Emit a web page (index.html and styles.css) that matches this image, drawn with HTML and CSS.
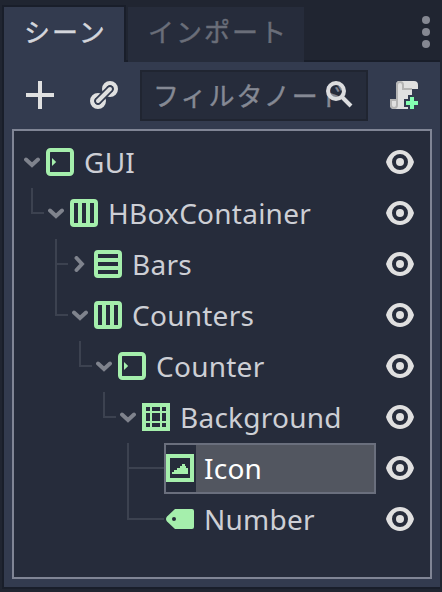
FILE: index.html
```html
<!DOCTYPE html>
<html lang="ja">
<head>
<meta charset="utf-8">
<title>シーン</title>
<link rel="stylesheet" href="styles.css">
</head>
<body>
<svg class="defs" aria-hidden="true">
  <symbol id="control" viewBox="0 0 28 28"><rect x="2" y="2" width="24" height="24" rx="2.5" fill="none" stroke="currentColor" stroke-width="4"/><path d="M6 10l4.2 4L6 18z" fill="currentColor"/></symbol>
  <symbol id="hbox" viewBox="0 0 28 28"><path fill="currentColor" fill-rule="evenodd" d="M4 0h20a4 4 0 0 1 4 4v20a4 4 0 0 1-4 4H4a4 4 0 0 1-4-4V4a4 4 0 0 1 4-4zM4 4v20h4V4zM12 4v20h4V4zM20 4v20h4V4z"/></symbol>
  <symbol id="vbox" viewBox="0 0 28 28"><path fill="currentColor" fill-rule="evenodd" d="M4 0h20a4 4 0 0 1 4 4v20a4 4 0 0 1-4 4H4a4 4 0 0 1-4-4V4a4 4 0 0 1 4-4zM4 4v4h20V4zM4 12v4h20v-4zM4 20v4h20v-4z"/></symbol>
  <symbol id="ninepatch" viewBox="0 0 28 28"><path fill="currentColor" fill-rule="evenodd" d="M0 0h28v28H0zM4 4v4h4V4zM10 4v4h8V4zM20 4v4h4V4zM4 10v8h4v-8zM10 10v8h8v-8zM20 10v8h4v-8zM4 20v4h4v-4zM10 20v4h8v-4zM20 20v4h4v-4z"/></symbol>
  <symbol id="texture" viewBox="0 0 28 28"><path fill="currentColor" fill-rule="evenodd" d="M0 0h28v28H0zM4 4v20h20V4z"/><path fill="currentColor" d="M6 20v-2h2v-2h3v-2h3v-2h2v-2h3v2h1v2h2v6z"/></symbol>
  <symbol id="label" viewBox="0 0 28 28"><path fill="currentColor" fill-rule="evenodd" d="M9 4h17a2 2 0 0 1 2 2v16a2 2 0 0 1-2 2H9L1 16.500q-2-2.500 0-5zM8 12a2 2 0 1 0 0 4a2 2 0 1 0 0-4z"/></symbol>
  <symbol id="eye" viewBox="0 0 28 24"><path fill="currentColor" fill-rule="evenodd" d="M14 0C21 0 26 5 28 12C26 19 21 24 14 24S2 19 0 12C2 5 7 0 14 0zM14 4a8 8 0 1 0 0 16a8 8 0 1 0 0-16z"/><circle cx="14" cy="12" r="4" fill="currentColor"/></symbol>
  <symbol id="down" viewBox="0 0 16 11"><path d="M2 2.500l6 5.500 6-5.500" fill="none" stroke="currentColor" stroke-width="3.900" stroke-linecap="round"/></symbol>
  <symbol id="right" viewBox="0 0 11 16"><path d="M2.500 2l5.500 6-5.500 6" fill="none" stroke="currentColor" stroke-width="3.900" stroke-linecap="round"/></symbol>
</svg>
<main class="dock">
  <header class="tabs">
    <div class="tab active">シーン</div>
    <div class="tab">インポート</div>
    <svg class="more" viewBox="0 0 8 32"><circle cx="4" cy="4" r="4"/><circle cx="4" cy="16" r="4"/><circle cx="4" cy="28" r="4"/></svg>
  </header>
  <section class="panel">
    <div class="toolbar">
      <svg class="add" viewBox="0 0 28 28"><path d="M12 0h4v12h12v4H16v12h-4V16H0v-4h12z"/></svg>
      <svg class="link" viewBox="0 0 28 28">
        <circle cx="20" cy="8" r="5.700" class="ring"/><circle cx="8" cy="20" r="5.700" class="ring"/>
        <path d="M8 20L20 8" class="gap"/><path d="M8 20L20 8" class="rod"/>
      </svg>
      <div class="filter"><span>フィルタノード</span>
        <svg class="search" viewBox="0 0 28 28"><circle cx="10" cy="10" r="8"/><path d="M16 16l9 9"/></svg>
      </div>
      <svg class="script" viewBox="0 0 28 28">
        <path fill="#e0e0e0" d="M8 0h16a4 4 0 0 1 4 4v4h-6v20H4a4 4 0 0 1-4-4v-6h6V4a4 4 0 0 1 2-4z"/>
        <path fill="none" stroke="#b4b4b4" stroke-width="2" d="M10 1a3 3 0 0 0-3 3v20a3 3 0 0 1-6 0v-5h6M10 1a3 3 0 0 1 3 3v4h9"/>
        <path class="plus" d="M20 16h4v4h4v4h-4v4h-4v-4h-4v-4h4z"/>
      </svg>
    </div>
    <div class="tree">
      <div class="row"><i class="fold"><svg class="down"><use href="#down"/></svg></i><div class="item"><svg class="icon"><use href="#control"/></svg><span>GUI</span></div><svg class="eye"><use href="#eye"/></svg></div>
      <div class="row"><i class="guide end"></i><i class="fold"><svg class="down"><use href="#down"/></svg></i><div class="item"><svg class="icon"><use href="#hbox"/></svg><span>HBoxContainer</span></div><svg class="eye"><use href="#eye"/></svg></div>
      <div class="row"><i class="space"></i><i class="guide"></i><i class="fold"><svg class="right"><use href="#right"/></svg></i><div class="item"><svg class="icon"><use href="#vbox"/></svg><span>Bars</span></div><svg class="eye"><use href="#eye"/></svg></div>
      <div class="row"><i class="space"></i><i class="guide end"></i><i class="fold"><svg class="down"><use href="#down"/></svg></i><div class="item"><svg class="icon"><use href="#hbox"/></svg><span>Counters</span></div><svg class="eye"><use href="#eye"/></svg></div>
      <div class="row"><i class="space"></i><i class="space"></i><i class="guide end"></i><i class="fold"><svg class="down"><use href="#down"/></svg></i><div class="item"><svg class="icon"><use href="#control"/></svg><span>Counter</span></div><svg class="eye"><use href="#eye"/></svg></div>
      <div class="row"><i class="space"></i><i class="space"></i><i class="space"></i><i class="guide end"></i><i class="fold"><svg class="down"><use href="#down"/></svg></i><div class="item"><svg class="icon"><use href="#ninepatch"/></svg><span>Background</span></div><svg class="eye"><use href="#eye"/></svg></div>
      <div class="row"><i class="space"></i><i class="space"></i><i class="space"></i><i class="space"></i><i class="guide leaf"></i><div class="item selected"><svg class="icon"><use href="#texture"/></svg><span>Icon</span></div><svg class="eye"><use href="#eye"/></svg></div>
      <div class="row"><i class="space"></i><i class="space"></i><i class="space"></i><i class="space"></i><i class="guide end leaf"></i><div class="item"><svg class="icon"><use href="#label"/></svg><span>Number</span></div><svg class="eye"><use href="#eye"/></svg></div>
    </div>
  </section>
</main>
</body>
</html>
```
FILE: styles.css
```css
* { box-sizing: border-box; }
body {
  margin: 0;
  background: #202531;
  color: #cdcfd5;
  font: 28px/50px "Noto Sans", "Noto Sans CJK JP", sans-serif;
}
svg { display: block; flex: none; }
.defs { display: none; }
.dock {
  width: 442px;
  height: 592px;
  padding-top: 5px;
  border-left: 2px solid #202531;
  overflow: hidden;
}
.tabs {
  display: flex;
  height: 57px;
  width: 438px;
  box-shadow: inset 0 -2px #191e2a;
}
.tab {
  width: 176px;
  margin: 2px 0 0 2px;
  padding-left: 20px;
  background: #262c3b;
  color: #6a6e79;
  font-family: "Noto Sans CJK JP", sans-serif;
  font-size: 26px;
  line-height: 48px;
  letter-spacing: 2px;
  white-space: nowrap;
  -webkit-text-stroke: 0.4px;
}
.tab.active {
  width: 124px;
  margin: 0;
  border: 2px solid #191e2a;
  border-bottom: 0;
  background: #333b4f;
  color: #d4d6dc;
}
.more { width: 8px; height: 32px; margin: 11px 10px 0 auto; fill: #858892; }
.panel {
  width: 438px;
  height: 527px;
  padding: 8px 8px 0;
  background: #333b4f;
  border: solid #191e2a;
  border-width: 0 0 2px 2px;
}
.toolbar { display: flex; align-items: center; height: 51px; padding-left: 14px; }
.add, .link, .script { width: 28px; height: 28px; margin-bottom: 1px; }
.add { fill: #e0e0e0; }
.link { margin-left: 36px; }
.ring { fill: none; stroke: #e0e0e0; stroke-width: 4.6; }
.gap, .rod { stroke-linecap: round; }
.gap { stroke: #333b4f; stroke-width: 7.5; }
.rod { stroke: #e0e0e0; stroke-width: 4; }
.filter {
  position: relative;
  width: 228px;
  height: 51px;
  margin-left: 22px;
  padding-left: 11px;
  border: 2px solid #202531;
  background: #262c3b;
  color: #858994;
  font-family: "Noto Sans CJK JP", sans-serif;
  font-size: 26px;
  line-height: 45px;
  letter-spacing: 2px;
  white-space: nowrap;
  -webkit-text-stroke: 0.4px;
}
.filter span { display: block; }
.search { position: absolute; right: 12px; top: 9px; width: 28px; height: 28px; fill: none; stroke: #dcdddf; stroke-width: 4; }
.script { margin-left: 22px; overflow: visible; }
.plus { fill: #84ffb1; stroke: #333b4f; stroke-width: 4; paint-order: stroke; }
.tree {
  width: 420px;
  height: 450px;
  margin-top: 8px;
  padding: 6px 16px 0 6px;
  border: 2px solid #808595;
  background: #262c3b;
}
.row { display: flex; align-items: center; height: 51px; }
.row > i { flex: none; width: 24px; height: 51px; }
.row .fold { display: flex; align-items: center; justify-content: center; color: #7f838d; }
.down { width: 16px; height: 11px; }
.right { width: 11px; height: 16px; margin: 0 2px 1px 0; }
.row .guide {
  --line: #3c4250;
  margin-left: 11px;
  width: 13px;
  background: linear-gradient(var(--line), var(--line)) 0 24px / 100% 2px no-repeat,
    linear-gradient(var(--line), var(--line)) 0 0 / 2px 100% no-repeat;
}
.row .guide.end { background-size: 100% 2px, 2px 26px; }
.row .guide.leaf { width: 37px; }
.item {
  display: flex;
  align-items: center;
  flex: 1;
  height: 51px;
  margin-right: 10px;
  border: 2px solid transparent;
}
.item span { padding-left: 8px; margin-left: 2px; height: 47px; line-height: 46px; letter-spacing: 0.25px; flex: 1; white-space: nowrap; }
.icon { width: 28px; height: 28px; margin-bottom: 1px; color: #a5efac; }
.selected { border-color: #6a6f7d; }
.selected span { background: #525660; color: #fff; }
.eye { width: 28px; height: 24px; margin-bottom: 1px; color: #e0e0e0; }
```
